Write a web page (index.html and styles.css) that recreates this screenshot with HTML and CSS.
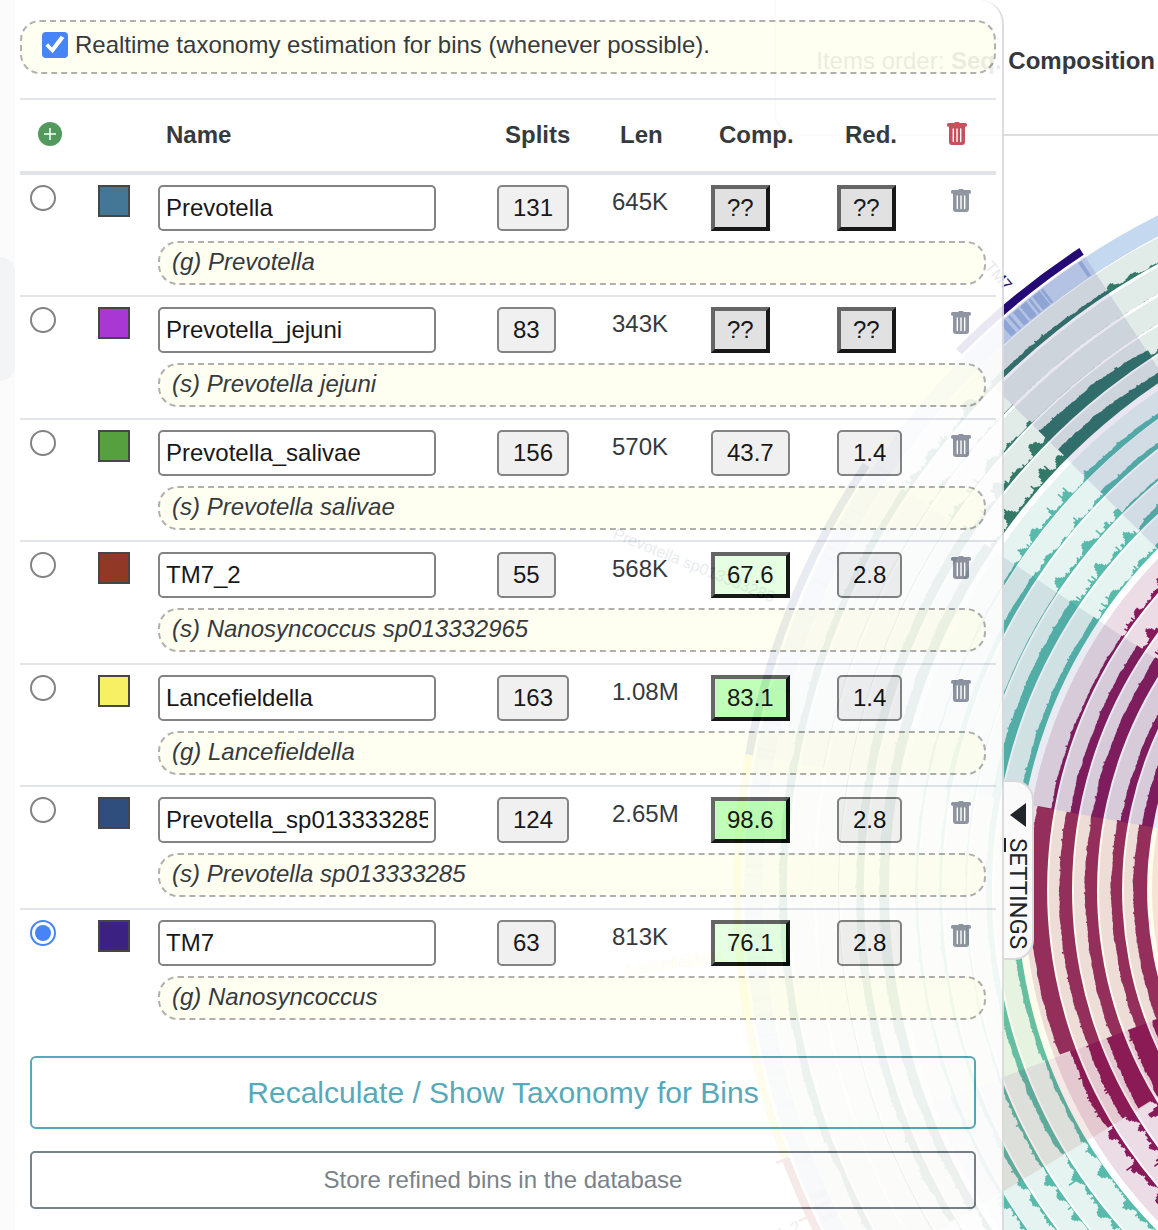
FILE: index.html
```html
<!DOCTYPE html>
<html lang="en">
<head>
<meta charset="utf-8">
<title>Bins</title>
<link rel="stylesheet" href="styles.css">
</head>
<body>
<svg class="symbols" aria-hidden="true">
  <symbol id="trash" viewBox="0 0 20 24">
    <path fill="currentColor" fill-rule="evenodd" d="M7.200 1a1.500 1.500 0 0 1 1.300-1h3a1.500 1.500 0 0 1 1.300 1H18.500A1.500 1.500 0 0 1 20 2.500v.8a1.500 1.500 0 0 1-1.500 1.500H18V20a3 3 0 0 1-3 3H5a3 3 0 0 1-3-3V4.800h-.5A1.500 1.500 0 0 1 0 3.300v-.8A1.500 1.500 0 0 1 1.500 1zM5.600 7v12.500a.7.7 0 0 0 1.400 0V7a.7.7 0 0 0-1.400 0zm3.700 0v12.500a.7.7 0 0 0 1.400 0V7a.7.7 0 0 0-1.400 0zm3.700 0v12.500a.7.7 0 0 0 1.400 0V7a.7.7 0 0 0-1.400 0z"/>
  </symbol>
</svg>
<main class="page">
  <svg class="diagram" id="diagram" viewBox="0 0 1158 1230" preserveAspectRatio="xMaxYMin slice" aria-hidden="true"></svg>
  <header class="title-bar">Items order: <strong>Seq. Composition</strong></header>
  <div class="left-edge"></div>

  <section class="panel">
    <label class="realtime"><input class="check" type="checkbox" checked>Realtime taxonomy estimation for bins (whenever possible).</label>

    <table class="bins">
      <colgroup><col class="c-pick"><col class="c-color"><col><col class="c-splits"><col class="c-len"><col class="c-comp"><col class="c-red"><col class="c-del"></colgroup>
      <thead>
        <tr>
          <th class="add"><button class="icon-btn" aria-label="Add bin"><svg class="plus" viewBox="0 0 24 24"><circle cx="12" cy="12" r="12"/><path d="M12 6v12M6 12h12"/></svg></button></th>
          <th></th><th>Name</th><th>Splits</th><th>Len</th><th>Comp.</th><th>Red.</th>
          <th class="del-all"><button class="icon-btn" aria-label="Delete all"><svg class="trash"><use href="#trash"/></svg></button></th>
        </tr>
      </thead>
      <tbody>
        <tr class="main"><td class="pick"><input class="radio" type="radio" name="bin" aria-label="Select Prevotella"></td>
          <td><button class="swatch" style="background:#30698a" aria-label="Colour"></button></td>
          <td><input class="name" type="text" value="Prevotella" aria-label="Bin name"></td>
          <td><button class="num">131</button></td><td class="len">645K</td>
          <td><button class="num raised unknown">??</button></td><td><button class="num raised unknown">??</button></td>
          <td class="del"><button class="icon-btn" aria-label="Delete"><svg class="trash"><use href="#trash"/></svg></button></td></tr>
        <tr class="tax-row"><td></td><td></td><td colspan="6"><div class="tax">(g) Prevotella</div></td></tr>
      </tbody>
      <tbody>
        <tr class="main"><td class="pick"><input class="radio" type="radio" name="bin" aria-label="Select Prevotella_jejuni"></td>
          <td><button class="swatch" style="background:#9f22d0" aria-label="Colour"></button></td>
          <td><input class="name" type="text" value="Prevotella_jejuni" aria-label="Bin name"></td>
          <td><button class="num">83</button></td><td class="len">343K</td>
          <td><button class="num raised unknown">??</button></td><td><button class="num raised unknown">??</button></td>
          <td class="del"><button class="icon-btn" aria-label="Delete"><svg class="trash"><use href="#trash"/></svg></button></td></tr>
        <tr class="tax-row"><td></td><td></td><td colspan="6"><div class="tax">(s) Prevotella jejuni</div></td></tr>
      </tbody>
      <tbody>
        <tr class="main"><td class="pick"><input class="radio" type="radio" name="bin" aria-label="Select Prevotella_salivae"></td>
          <td><button class="swatch" style="background:#44962b" aria-label="Colour"></button></td>
          <td><input class="name" type="text" value="Prevotella_salivae" aria-label="Bin name"></td>
          <td><button class="num">156</button></td><td class="len">570K</td>
          <td><button class="num">43.7</button></td><td><button class="num">1.4</button></td>
          <td class="del"><button class="icon-btn" aria-label="Delete"><svg class="trash"><use href="#trash"/></svg></button></td></tr>
        <tr class="tax-row"><td></td><td></td><td colspan="6"><div class="tax">(s) Prevotella salivae</div></td></tr>
      </tbody>
      <tbody>
        <tr class="main"><td class="pick"><input class="radio" type="radio" name="bin" aria-label="Select TM7_2"></td>
          <td><button class="swatch" style="background:#86240f" aria-label="Colour"></button></td>
          <td><input class="name" type="text" value="TM7_2" aria-label="Bin name"></td>
          <td><button class="num">55</button></td><td class="len">568K</td>
          <td><button class="num raised fair">67.6</button></td><td><button class="num">2.8</button></td>
          <td class="del"><button class="icon-btn" aria-label="Delete"><svg class="trash"><use href="#trash"/></svg></button></td></tr>
        <tr class="tax-row"><td></td><td></td><td colspan="6"><div class="tax">(s) Nanosyncoccus sp013332965</div></td></tr>
      </tbody>
      <tbody>
        <tr class="main"><td class="pick"><input class="radio" type="radio" name="bin" aria-label="Select Lancefieldella"></td>
          <td><button class="swatch" style="background:#f8ef54" aria-label="Colour"></button></td>
          <td><input class="name" type="text" value="Lancefieldella" aria-label="Bin name"></td>
          <td><button class="num">163</button></td><td class="len">1.08M</td>
          <td><button class="num raised good">83.1</button></td><td><button class="num">1.4</button></td>
          <td class="del"><button class="icon-btn" aria-label="Delete"><svg class="trash"><use href="#trash"/></svg></button></td></tr>
        <tr class="tax-row"><td></td><td></td><td colspan="6"><div class="tax">(g) Lancefieldella</div></td></tr>
      </tbody>
      <tbody>
        <tr class="main"><td class="pick"><input class="radio" type="radio" name="bin" aria-label="Select Prevotella_sp013333285"></td>
          <td><button class="swatch" style="background:#193a70" aria-label="Colour"></button></td>
          <td><input class="name" type="text" value="Prevotella_sp013333285" aria-label="Bin name"></td>
          <td><button class="num">124</button></td><td class="len">2.65M</td>
          <td><button class="num raised good">98.6</button></td><td><button class="num">2.8</button></td>
          <td class="del"><button class="icon-btn" aria-label="Delete"><svg class="trash"><use href="#trash"/></svg></button></td></tr>
        <tr class="tax-row"><td></td><td></td><td colspan="6"><div class="tax">(s) Prevotella sp013333285</div></td></tr>
      </tbody>
      <tbody>
        <tr class="main"><td class="pick"><input class="radio" type="radio" name="bin" checked aria-label="Select TM7"></td>
          <td><button class="swatch" style="background:#250a75" aria-label="Colour"></button></td>
          <td><input class="name" type="text" value="TM7" aria-label="Bin name"></td>
          <td><button class="num">63</button></td><td class="len">813K</td>
          <td><button class="num raised fair">76.1</button></td><td><button class="num">2.8</button></td>
          <td class="del"><button class="icon-btn" aria-label="Delete"><svg class="trash"><use href="#trash"/></svg></button></td></tr>
        <tr class="tax-row"><td></td><td></td><td colspan="6"><div class="tax">(g) Nanosyncoccus</div></td></tr>
      </tbody>
    </table>

    <div class="actions">
      <button class="btn btn-info">Recalculate / Show Taxonomy for Bins</button>
      <button class="btn btn-secondary">Store refined bins in the database</button>
    </div>
  </section>

  <button class="settings-tab"><svg class="arrow" viewBox="0 0 16 24"><path d="M16 0v24L0 12z"/></svg><span><u>S</u>ETTINGS</span></button>
</main>
<script src="app.js"></script>
</body>
</html>
```
FILE: styles.css
```css
* { box-sizing: border-box; }

body {
  margin: 0;
  background: #fff;
  color: #212529;
  font: 24px/36px "Liberation Sans", Arial, sans-serif;
}

button, input { font: inherit; color: #000; margin: 0; }
button { cursor: pointer; }

.symbols { position: absolute; width: 0; height: 0; }

.page {
  position: relative;
  min-height: 100vh;
  overflow: hidden;
}

.diagram {
  position: absolute;
  inset: 0;
  width: 100%;
  height: 100%;
}

.title-bar {
  position: absolute;
  top: 0;
  right: 0;
  width: 384px;
  height: 136px;
  padding: 43px 3px 0 0;
  border: 2px solid #dedede;
  border-width: 0 0 2px 2px;
  border-bottom-left-radius: 24px;
  color: #34383c;
  text-align: right;
  white-space: nowrap;
}

.left-edge {
  position: absolute;
  inset: 0 auto 0 0;
  width: 15px;
  background: #fbfbfb;
}
.left-edge::after {
  content: "";
  position: absolute;
  top: 257px;
  left: 0;
  width: 15px;
  height: 124px;
  background: #f3f4f6;
  border-radius: 0 16px 16px 0;
}

.panel {
  position: relative;
  margin: 0 154px 0 15px;
  padding: 20px 6px 21px 5px;
  background: #fff;
  border-right: 2px solid #dadadc;
  border-top-right-radius: 24px;
  opacity: .9;
}

.realtime {
  display: flex;
  align-items: center;
  gap: 7px;
  height: 54px;
  padding: 0 20px 4px;
  border: 2px dashed #a8a8a8;
  border-radius: 20px;
  background: #fffff0;
}

.check, .radio {
  appearance: none;
  display: block;
  width: 26px;
  height: 26px;
  flex: none;
}
.check { background: #3478f6; border-radius: 4px; }
.check::before {
  content: "";
  display: block;
  width: 26px;
  height: 26px;
  background: #fff;
  clip-path: polygon(13% 53%, 24% 43%, 38% 60%, 72% 14%, 86% 23%, 41% 82%);
}
.radio { border: 2px solid #767676; border-radius: 50%; background: #fff; }
.radio:checked { border-color: #3478f6; padding: 3px; }
.radio:checked::before {
  content: "";
  display: block;
  width: 16px;
  height: 16px;
  border-radius: 50%;
  background: #3478f6;
}

.bins {
  width: 100%;
  margin-top: 24px;
  table-layout: fixed;
  border-collapse: separate;
  border-spacing: 0;
}
.c-pick { width: 78px; }
.c-color { width: 60px; }
.c-splits { width: 115px; }
.c-len { width: 99px; }
.c-comp { width: 126px; }
.c-red { width: 90px; }
.c-del { width: 69px; }

th, td { padding: 0; text-align: left; vertical-align: top; }
th {
  height: 77px;
  padding: 17px 0 0 8px;
  border-top: 2px solid #dee2e6;
  border-bottom: 4px solid #dee2e6;
}
.add { padding: 22px 0 0 18px; }
.del-all { padding-left: 20px; padding-top: 22px; color: #c33c4b; }

.main td { height: 66px; padding-top: 10px; }
.main .pick { padding-left: 10px; }
.main .len { padding-top: 9px; }
.main .del { padding: 14px 0 0 24px; color: #848a99; }
.tax-row td { height: 54px; }
tbody:nth-of-type(even) .tax-row td { height: 55px; }
tbody + tbody .main td { border-top: 2px solid #dee2e6; height: 68px; }

.icon-btn {
  display: block;
  padding: 0;
  border: 0;
  background: none;
  color: inherit;
}
.plus { display: block; width: 24px; height: 24px; fill: #408f4d; stroke: #fff; stroke-width: 1.5; }
.plus circle { stroke: none; }
.trash { display: block; width: 20px; height: 24px; }

.swatch { display: block; width: 32px; height: 32px; padding: 0; border: 2px solid #333; }

.name {
  display: block;
  width: 278px;
  height: 46px;
  padding: 0 6px;
  border: 2px solid #767676;
  border-radius: 5px;
  background: #fff;
}

.num {
  display: block;
  height: 46px;
  padding: 0 14px;
  border: 2px solid #767676;
  border-radius: 5px;
  background: #efefef;
}
.raised {
  padding: 0 12px;
  border: 4px solid;
  border-color: #555 #000 #000 #555;
  border-radius: 0;
}
.unknown { background: #dedede; }
.fair { background: #e4ffe0; }
.good { background: #b9ffb0; }

.tax {
  height: 44px;
  margin-right: 10px;
  padding: 1px 12px;
  border: 2px dashed #a8a8a8;
  border-radius: 20px;
  background: #fffff0;
  font-style: italic;
}

.actions {
  display: flex;
  flex-direction: column;
  gap: 22px;
  margin-top: 26px;
  padding: 0 20px 0 10px;
}
.btn { width: 100%; background: none; border: 2px solid; border-radius: 6px; }
.btn-info { height: 73px; font-size: 30px; color: #45a0b2; }
.btn-secondary { height: 58px; border-radius: 5px; color: #6c757d; }

.settings-tab {
  position: absolute;
  top: 780px;
  right: 124px;
  display: flex;
  flex-direction: column;
  align-items: center;
  gap: 11px;
  width: 30px;
  padding: 21px 0 9px;
  border: 2px solid #dadadc;
  border-left: 0;
  border-radius: 0 20px 20px 0;
  background: #fafafa;
  color: #212529;
  font: 24px/28px Roboto, sans-serif;
}
.settings-tab span { writing-mode: vertical-rl; }
.settings-tab u {
  text-decoration: none;
  background: linear-gradient(#212529, #212529) left / 2px 100% no-repeat;
}
.arrow { width: 16px; height: 24px; fill: #212529; }
```
FILE: app.js
```javascript
(function () {
  var svg = document.getElementById('diagram');
  var NS = 'http://www.w3.org/2000/svg';
  var CX = 1501, CY = 890;

  var seed = 7;
  function rnd() {
    seed = (seed * 16807) % 2147483647;
    return seed / 2147483647;
  }
  function el(name, attrs, text) {
    var node = document.createElementNS(NS, name);
    for (var k in attrs) node.setAttribute(k, attrs[k]);
    if (text) node.textContent = text;
    svg.appendChild(node);
  }
  // Angles are in degrees, 0 to the left of the centre, growing clockwise.
  function pt(r, a) {
    var t = a * Math.PI / 180;
    return (CX - r * Math.cos(t)).toFixed(1) + ' ' + (CY - r * Math.sin(t)).toFixed(1);
  }
  function ring(r0, r1, a0, a1, fill, opacity) {
    el('path', {
      d: 'M' + pt(r1, a0) + 'A' + r1 + ' ' + r1 + ' 0 0 1 ' + pt(r1, a1) +
        'L' + pt(r0, a1) + 'A' + r0 + ' ' + r0 + ' 0 0 0 ' + pt(r0, a0) + 'Z',
      fill: fill, 'fill-opacity': opacity || 1
    });
  }

  var MIN = -50, MAX = 75;
  // Sector limits: unbinned, red, yellow, blue, unbinned, TM7, unbinned
  var limits = [MIN, -31.2, -20.6, 10.2, 33.8, 44.8, 56.7, MAX];
  var rough = [2, 0.8, 0.5, 0.5, 2, 0.6, 1.2];

  var groups = [
    { bg: '#e1ebe8', fg: '#33796a', bases: [714, 688, 662, 637, 612], h: [
      [5, 6, 8, 7, 6, 5, 4], [1, 0, 0, 1, 2, 0, 0], [2, 1, 1, 1, 3, 0, 0],
      [7, 8, 8, 9, 8, 13, 7], [8, 9, 10, 10, 8, 12, 7]] },
    { bg: '#e5f4f1', fg: '#57baab', bases: [583, 559, 534, 509, 484], h: [
      [6, 4, 3, 2, 6, 5, 5], [5, 4, 3, 5, 4, 5, 5], [6, 3, 2, 1, 5, 2, 3],
      [6, 6, 6, 9, 6, 6, 5], [6, 4, 6, 6, 5, 6, 5]] },
    { bg: '#ecdce6', fg: '#881a5c', bases: [454, 429, 404, 379, 354], h: [
      [7, 7, 17, 3, 6, 5, 5], [8, 13, 13, 9, 6, 8, 5], [9, 18, 12, 12, 8, 8, 5],
      [9, 20, 11, 7, 8, 8, 5], [9, 19, 14, 11, 8, 8, 5]] }
  ];

  ring(738, 757, MIN, MAX, '#c4d8f0');
  for (var s = 0; s < 44; s++) {
    var a = 34 + rnd() * -64;
    ring(739, 756, a, a + 0.12 + rnd() * 0.3, '#9fb8dc', 0.6);
  }
  [[48.500, .5], [49.300, .2], [49.800, .5], [50.500, .6], [51.300, .2], [51.700, .7], [52.500, .2], [56, .3]].forEach(function (b) {
    ring(739, 756, b[0], b[0] + b[1], '#90aedb', 0.8);
  });

  groups.forEach(function (g) {
    g.bases.forEach(function (base, i) {
      ring(base, base + 23, MIN, MAX, g.bg);
      var d = 'M' + pt(base, MIN), wave = 0, step = 90 / base;
      for (var a = MIN, sec = 0; a < MAX; a += step) {
        while (a > limits[sec + 1]) sec++;
        var ragged = sec === 0 || sec === 4 || sec === 6;
        wave = wave * 0.8 + (rnd() - 0.5) * rough[sec] * 1.6;
        var h = g.h[i][sec], spike = h;
        if (ragged) {
          // Coverage swells in clusters and falls to almost nothing between them
          var swell = Math.sin(a * 1.9 + i * 2.3) * Math.sin(a * 0.7 + i);
          h *= 0.35 + Math.max(0, swell) * 1.4;
        }
        if (sec === 5 && a > 51) h *= 1 - (a - 51) * 0.06;
        h += spike < 2 ? Math.abs(wave) * 0.3 - 0.3 : wave;
        if (spike > 2 && rnd() > 0.93) h += rnd() * 3 * rough[sec];
        h = Math.max(spike < 2 ? 0 : 0.5, Math.min(22, h));
        d += 'L' + pt(base + h, a) + 'L' + pt(base + h, a + step);
      }
      d += 'L' + pt(base, MAX) + 'A' + base + ' ' + base + ' 0 0 0 ' + pt(base, MIN) + 'Z';
      el('path', { d: d, fill: g.fg });
    });
  });
  ring(250, 349, MIN, MAX, '#f8e2e4');

  // Bins: tint over their sector and an outer band
  [[1, '#a02a18'], [2, '#f9f04a'], [3, '#1c3a72'], [5, '#240a75']].forEach(function (b) {
    ring(200, 758, limits[b[0]], limits[b[0] + 1], b[1], 0.1);
    ring(760, 768, limits[b[0]], limits[b[0] + 1], b[1]);
  });

  function label(x, y, rot, size, fill, text, anchor) {
    el('text', {
      transform: 'translate(' + x + ' ' + y + ') rotate(' + rot + ')', fill: fill,
      'font-size': size, 'font-family': '"Liberation Sans", Arial, sans-serif',
      'text-anchor': anchor || 'start'
    }, text);
  }
  label(984, 267, 50, 16, '#240a75', 'TM7');
  label(612, 538, 22, 16, '#1c3a72', 'Prevotella sp013333285');
  label(628, 975, -8, 16, '#f9f04a', 'Lancefieldella');
  label(802, 1230, -26, 16, '#a02a18', 'TM7_2', 'end');
  el('path', { d: 'M776 1163l12-5M799 1221l9-4', stroke: '#a02a18', 'stroke-width': 2 });
})();
```
